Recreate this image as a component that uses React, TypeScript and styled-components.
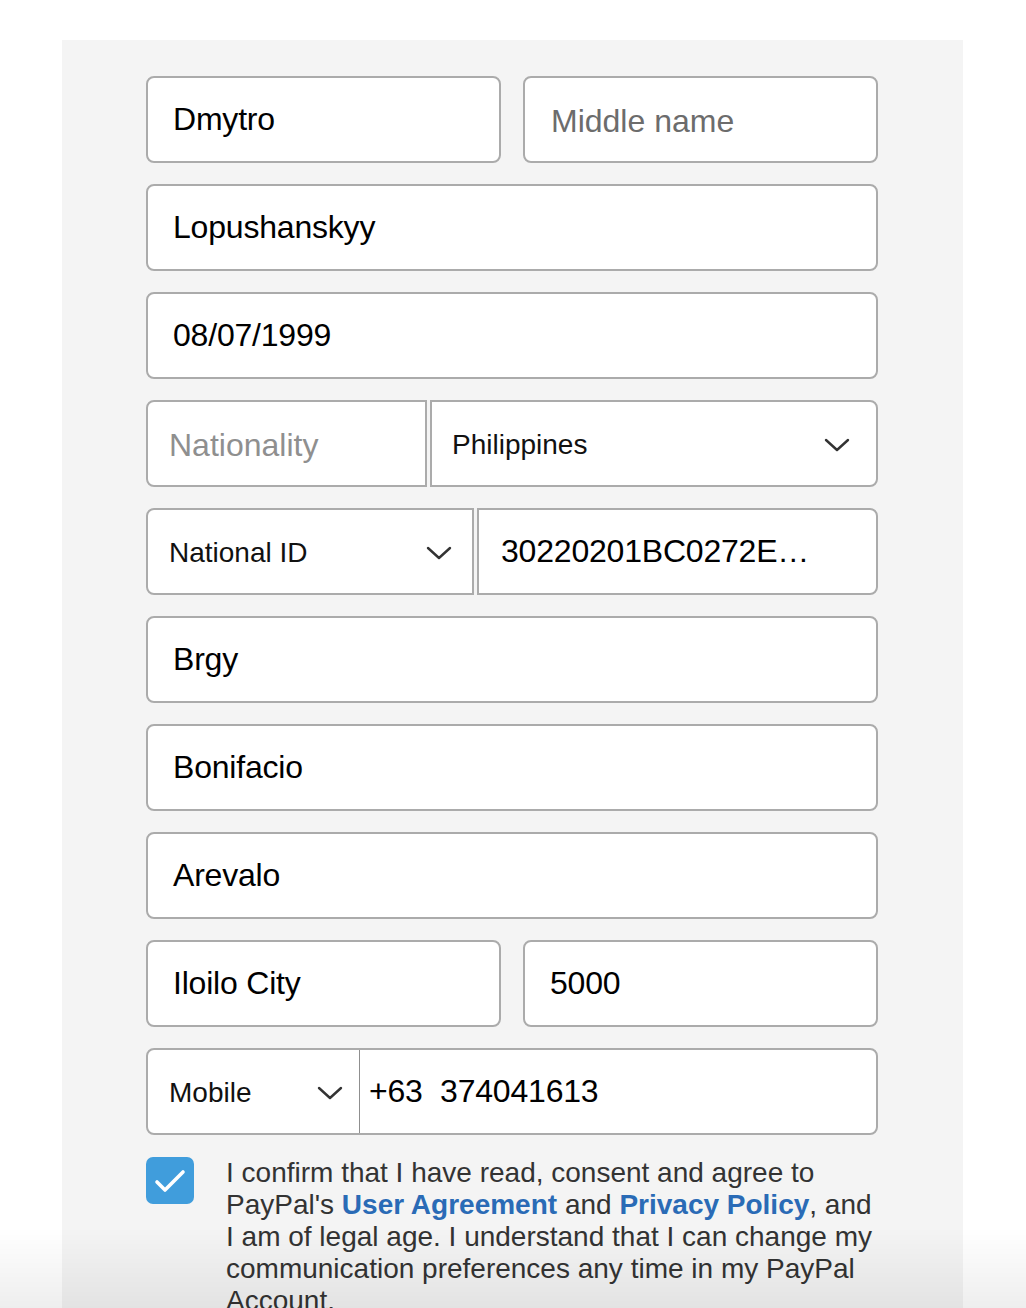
import styled, { createGlobalStyle } from 'styled-components'

const GlobalStyle = createGlobalStyle`
  html, body {
    margin: 0;
    padding: 0;
    background: #ffffff;
    font-family: "Liberation Sans", Arial, Helvetica, sans-serif;
  }
  * { box-sizing: border-box; }
`

const Page = styled.div`
  padding: 40px 63px 0 62px;
  height: 1308px;
  overflow: hidden;
`

const Panel = styled.div`
  background: #f4f4f4;
  padding: 36px 85px 40px 84px;
  min-height: 1268px;
`

const Form = styled.div`
  display: flex;
  flex-direction: column;
  gap: 21px;
`

const Row = styled.div<{ $cols?: string; $gap?: number }>`
  display: grid;
  grid-template-columns: ${(p) => p.$cols || '1fr'};
  gap: ${(p) => p.$gap ?? 22}px;
`

const Field = styled.div<{ $side?: 'left' | 'right'; $pad?: number; $padRight?: number }>`
  height: 87px;
  background: #ffffff;
  border: 2px solid #ababab;
  border-radius: ${(p) =>
    p.$side === 'left' ? '8px 0 0 8px' : p.$side === 'right' ? '0 8px 8px 0' : '8px'};
  display: flex;
  align-items: center;
  padding: 0 ${(p) => p.$padRight ?? 22}px 0 ${(p) => p.$pad ?? 25}px;
  overflow: hidden;
`

const Value = styled.span`
  font-size: 32px;
  color: #000000;
  white-space: pre;
  letter-spacing: -0.2px;
`

const Placeholder = styled.span<{ $light?: boolean }>`
  font-size: 32px;
  color: ${(p) => (p.$light ? '#8f8f8f' : '#6c6c6c')};
  margin-top: 3px;
`

const SelectText = styled.span`
  flex: 1;
  font-size: 28px;
  color: #111111;
  margin-top: 3px;
`

const PhoneBox = styled.div`
  height: 87px;
  background: #ffffff;
  border: 2px solid #ababab;
  border-radius: 8px;
  display: grid;
  grid-template-columns: 212px 1fr;
  overflow: hidden;
`

const PhoneType = styled.div`
  display: flex;
  align-items: center;
  padding: 0 16px 0 21px;
  border-right: 1px solid #8f8f8f;
`

const PhoneNumber = styled.div`
  display: flex;
  align-items: center;
  padding-left: 9px;
`

const Consent = styled.div`
  display: flex;
  gap: 32px;
  align-items: flex-start;
`

const CheckBox = styled.div`
  flex: 0 0 48px;
  height: 47px;
  margin-top: 1px;
  border-radius: 7px;
  background: #409ddc;
  display: flex;
  align-items: center;
  justify-content: center;
`

const ConsentText = styled.p`
  margin: 1px 0 0;
  font-size: 28px;
  line-height: 32px;
  color: #333333;
  max-width: 656px;
`

const Link = styled.a`
  color: #2a6bb6;
  font-weight: bold;
  text-decoration: none;
`

const BottomShade = styled.div`
  position: fixed;
  left: 0;
  right: 0;
  bottom: 0;
  height: 80px;
  pointer-events: none;
  background: linear-gradient(to bottom, rgba(0, 0, 0, 0), rgba(0, 0, 0, 0.065));
`

const Chevron = () => (
  <svg width="26" height="16" viewBox="0 0 26 16">
    <polyline
      points="2,4 13,14 24,4"
      fill="none"
      stroke="#333333"
      strokeWidth="2.4"
      strokeLinecap="round"
      strokeLinejoin="round"
    />
  </svg>
)

const Check = () => (
  <svg width="32" height="26" viewBox="0 0 32 26">
    <polyline
      points="3,14 11,22 29,4"
      fill="none"
      stroke="#ffffff"
      strokeWidth="3.6"
      strokeLinecap="round"
      strokeLinejoin="round"
    />
  </svg>
)

const App = () => (
  <>
    <GlobalStyle />
    <Page>
      <Panel>
        <Form>
          <Row $cols="1fr 1fr">
            <Field>
              <Value>Dmytro</Value>
            </Field>
            <Field $pad={26}>
              <Placeholder>Middle name</Placeholder>
            </Field>
          </Row>
          <Field>
            <Value>Lopushanskyy</Value>
          </Field>
          <Field>
            <Value>08/07/1999</Value>
          </Field>
          <Row $cols="281px 1fr" $gap={3}>
            <Field $side="left" $pad={21}>
              <Placeholder $light>Nationality</Placeholder>
            </Field>
            <Field $side="right" $pad={20} $padRight={26}>
              <SelectText>Philippines</SelectText>
              <Chevron />
            </Field>
          </Row>
          <Row $cols="328px 1fr" $gap={3}>
            <Field $side="left" $pad={21} $padRight={20}>
              <SelectText>National ID</SelectText>
              <Chevron />
            </Field>
            <Field $side="right" $pad={22}>
              <Value>30220201BC0272E…</Value>
            </Field>
          </Row>
          <Field>
            <Value>Brgy</Value>
          </Field>
          <Field>
            <Value>Bonifacio</Value>
          </Field>
          <Field>
            <Value>Arevalo</Value>
          </Field>
          <Row $cols="1fr 1fr">
            <Field>
              <Value>Iloilo City</Value>
            </Field>
            <Field>
              <Value>5000</Value>
            </Field>
          </Row>
          <PhoneBox>
            <PhoneType>
              <SelectText>Mobile</SelectText>
              <Chevron />
            </PhoneType>
            <PhoneNumber>
              <Value>+63  374041613</Value>
            </PhoneNumber>
          </PhoneBox>
          <Consent>
            <CheckBox>
              <Check />
            </CheckBox>
            <ConsentText>
              I confirm that I have read, consent and agree to PayPal's{' '}
              <Link href="#">User Agreement</Link> and <Link href="#">Privacy Policy</Link>, and I
              am of legal age. I understand that I can change my communication preferences any
              time in my PayPal Account.
            </ConsentText>
          </Consent>
        </Form>
      </Panel>
    </Page>
    <BottomShade />
  </>
)

export default App
